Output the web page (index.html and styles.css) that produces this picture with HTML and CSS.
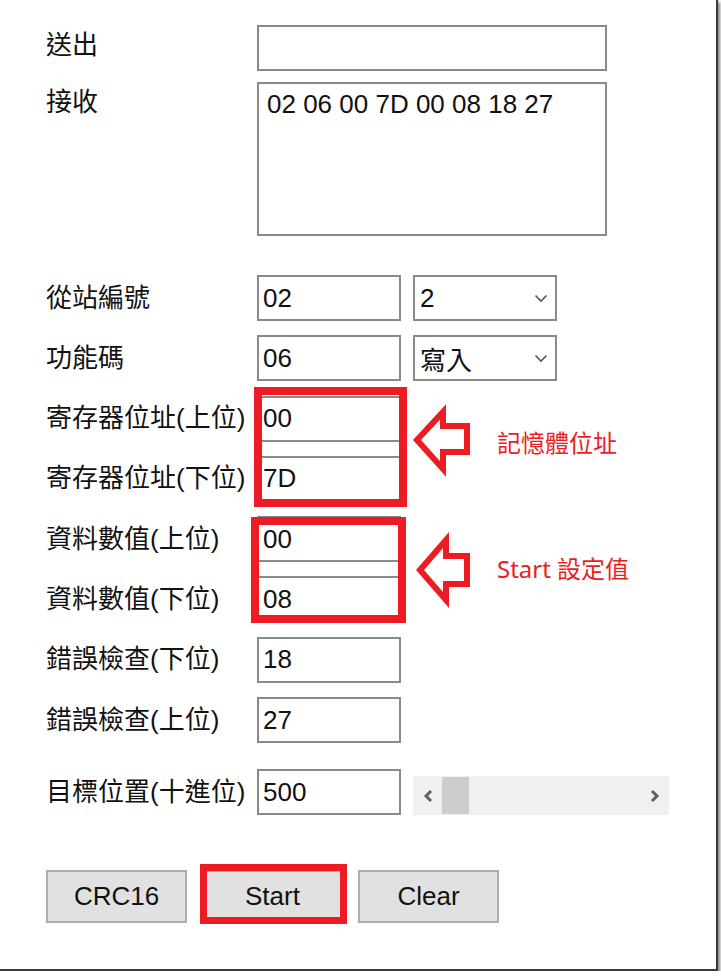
FILE: index.html
```html
<!DOCTYPE html>
<html>
	<head>
		<meta charset="utf-8">
		<title>Modbus CRC16</title>
		<link rel="stylesheet" href="styles.css">
	</head>
	<body>
		<div class="frame">
			<div class="row row-send">
				<span class="name">送出</span>
				<input type="text" class="box wide">
			</div>
			<div class="row row-area">
				<span class="name">接收</span>
				<textarea class="box area">02 06 00 7D 00 08 18 27</textarea>
			</div>

			<div class="fields">
				<div class="row">
					<span class="name">從站編號</span>
					<input type="text" class="box short" value="02">
					<div class="box pick"><span>2</span><svg width="14" height="9" viewBox="0 0 14 9"><polyline points="1.5,1.5 7,7 12.5,1.5" fill="none" stroke="#555" stroke-width="1.6"/></svg></div>
				</div>
				<div class="row">
					<span class="name">功能碼</span>
					<input type="text" class="box short" value="06">
					<div class="box pick"><span>寫入</span><svg width="14" height="9" viewBox="0 0 14 9"><polyline points="1.5,1.5 7,7 12.5,1.5" fill="none" stroke="#555" stroke-width="1.6"/></svg></div>
				</div>
				<div class="row">
					<span class="name">寄存器位址(上位)</span>
					<input type="text" class="box short" value="00">
				</div>
				<div class="row">
					<span class="name">寄存器位址(下位)</span>
					<input type="text" class="box short" value="7D">
				</div>
				<div class="row">
					<span class="name">資料數值(上位)</span>
					<input type="text" class="box short" value="00">
				</div>
				<div class="row">
					<span class="name">資料數值(下位)</span>
					<input type="text" class="box short" value="08">
				</div>
				<div class="row">
					<span class="name">錯誤檢查(下位)</span>
					<input type="text" class="box short" value="18">
				</div>
				<div class="row">
					<span class="name">錯誤檢查(上位)</span>
					<input type="text" class="box short" value="27">
				</div>
			</div>

			<div class="row row-target">
				<span class="name">目標位置(十進位)</span>
				<input type="text" class="box short" value="500">
				<div class="scroll">
					<div class="arrow"><svg width="10" height="14" viewBox="0 0 10 14"><polyline points="8,2 3,7 8,12" fill="none" stroke="#606060" stroke-width="3"/></svg></div>
					<div class="thumb"></div>
					<div class="track"></div>
					<div class="arrow"><svg width="10" height="14" viewBox="0 0 10 14"><polyline points="2,2 7,7 2,12" fill="none" stroke="#606060" stroke-width="3"/></svg></div>
				</div>
			</div>

			<div class="actions">
				<button class="key">CRC16</button>
				<button class="key">Start</button>
				<button class="key">Clear</button>
			</div>

			<!-- annotations -->
			<div class="mark mark-addr"></div>
			<div class="mark mark-data"></div>
			<div class="mark mark-start"></div>
			<svg class="pointer pointer-addr" width="64" height="74" viewBox="0 0 64 74"><polygon points="7,37 33,9 33,23 57,23 57,49 33,49 33,66" fill="none" stroke="#ed1c24" stroke-width="6"/></svg>
			<svg class="pointer pointer-data" width="64" height="80" viewBox="0 0 64 80"><polygon points="10,40 36,10 36,26 57,26 57,54 36,54 36,70" fill="none" stroke="#ed1c24" stroke-width="6"/></svg>
			<div class="note note-addr">記憶體位址</div>
			<div class="note note-data">Start 設定值</div>
		</div>
	</body>
</html>
```

FILE: styles.css
```css
*{
	margin:0;
	padding:0;
}
body{
	background:#fff;
	font-family:"Liberation Sans","Noto Sans CJK TC",sans-serif;
	color:#111;
}
.frame{
	position:relative;
	box-sizing:border-box;
	width:718px;
	height:971px;
	padding:25px 0 0 46px;
	background:#fff;
	border-right:2px solid #3a3a3a;
	border-bottom:2px solid #3a3a3a;
	box-shadow:2px 2px 3px rgba(0,0,0,.5);
}
.row{
	display:flex;
	align-items:center;
}
.name{
	flex:none;
	width:211px;
	font-size:26px;
	line-height:31px;
	white-space:nowrap;
}
.row-send .name{
	margin-top:-6px;
}
.box{
	box-sizing:border-box;
	height:46px;
	border:2px solid #8a8a8a;
	background:#fff;
	font-family:"Liberation Sans","Noto Sans CJK TC",sans-serif;
	font-size:26px;
	color:#111;
	padding:0 4px;
	outline:none;
}
.wide{
	width:350px;
}
.short{
	width:144px;
}
.row-area{
	align-items:flex-start;
	margin-top:11px;
}
.row-area .name{
	padding-top:5px;
}
.area{
	width:350px;
	height:154px;
	padding:5px 8px;
	line-height:1.2;
	resize:none;
	overflow:hidden;
}
.fields{
	display:flex;
	flex-direction:column;
	gap:14.3px;
	margin-top:39px;
}
.pick{
	display:flex;
	align-items:center;
	justify-content:space-between;
	width:144px;
	margin-left:12px;
	padding:0 7px 0 5px;
}
.row-target{
	margin-top:26px;
}
.scroll{
	align-self:flex-end;
	display:flex;
	align-items:center;
	width:256px;
	height:39px;
	margin-left:12px;
	background:#f0f0f0;
}
.scroll .arrow{
	display:flex;
	justify-content:center;
	width:29px;
}
.scroll .thumb{
	width:27px;
	height:37px;
	background:#cdcdcd;
}
.scroll .track{
	flex:1;
}
.actions{
	display:flex;
	gap:15px;
	margin-top:55px;
}
.key{
	box-sizing:border-box;
	width:141px;
	height:53px;
	background:#e1e1e1;
	border:2px solid #adadad;
	font-family:"Liberation Sans",sans-serif;
	font-size:26px;
	color:#111;
}

/* red annotations drawn over the form */
.mark{
	position:absolute;
	box-sizing:border-box;
	border:8px solid #ed1c24;
}
.mark-addr{
	left:254px;
	top:387px;
	width:153px;
	height:120px;
}
.mark-data{
	left:251px;
	top:517px;
	width:155px;
	height:106px;
}
.mark-start{
	left:200px;
	top:864px;
	width:147px;
	height:60px;
	border-width:7px;
}
.pointer{
	position:absolute;
	left:410px;
}
.pointer-addr{
	top:403px;
}
.pointer-data{
	top:530px;
}
.note{
	position:absolute;
	left:497px;
	font-family:"Noto Sans","Noto Sans CJK TC",sans-serif;
	font-size:24px;
	line-height:30px;
	color:#ed1c24;
	white-space:nowrap;
}
.note-addr{
	top:428px;
}
.note-data{
	top:554px;
}
```
